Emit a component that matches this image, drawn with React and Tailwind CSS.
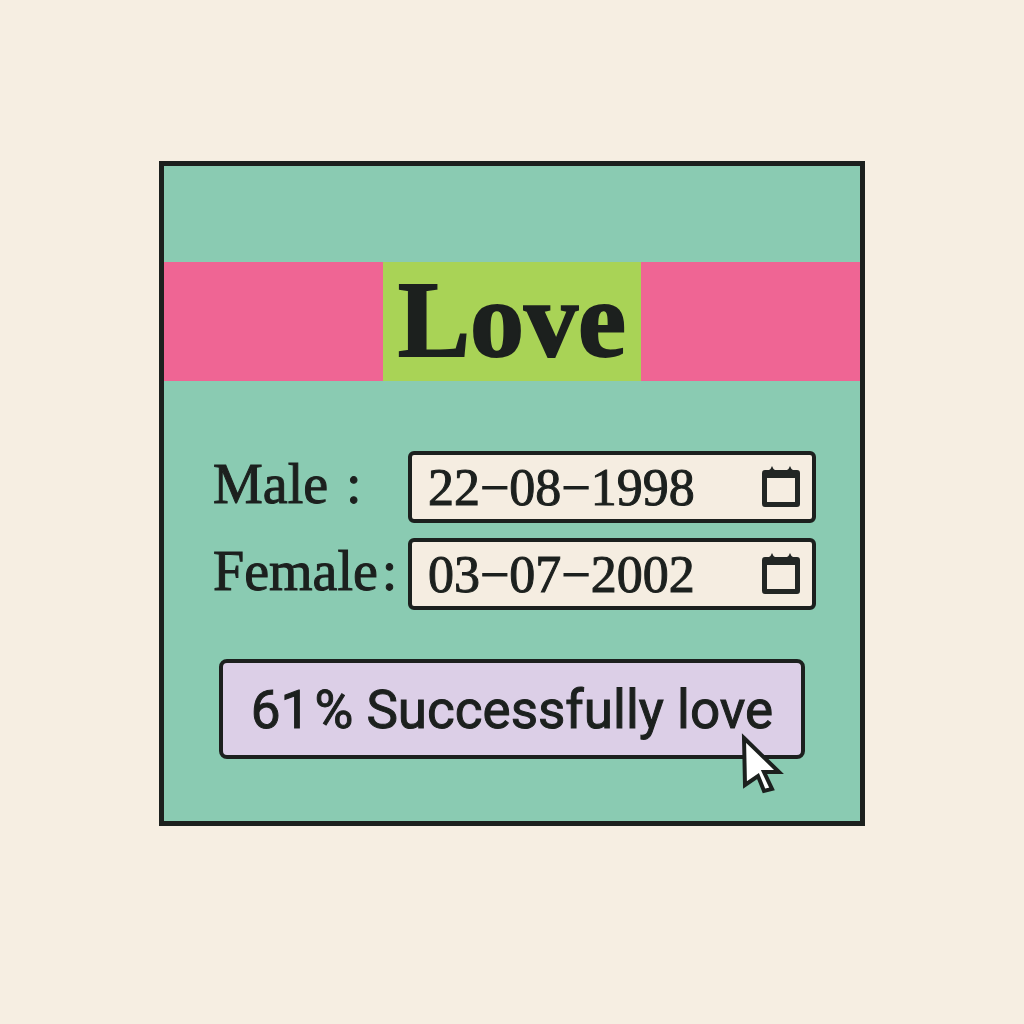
import { useState } from "react";

function CalendarIcon() {
  return (
    <svg viewBox="0 0 38 42" className="h-[42px] w-[38px]" aria-hidden="true">
      <path
        fillRule="evenodd"
        fill="#222624"
        d="M3 4H7Q9 3 10 0Q11 3 13 4H25Q27 3 28 0Q29 3 31 4H35Q38 4 38 7V38Q38 41 35 41H3Q0 41 0 38V7Q0 4 3 4ZM5 12V36H33V12Z"
      />
    </svg>
  );
}

function Cursor() {
  return (
    <svg
      viewBox="0 0 46 64"
      className="pointer-events-none absolute right-[19px] -bottom-[36px] h-16 w-[46px]"
      aria-hidden="true"
    >
      <path
        d="M4 7L39 41L24 41L32 58L24 60L18 45L5 54Z"
        fill="#fff"
        stroke="#1c201e"
        strokeWidth="4"
        strokeLinejoin="miter"
      />
    </svg>
  );
}

function DateRow({ id, label, colonClass, initial }) {
  const [value, setValue] = useState(initial);
  return (
    <div className="grid grid-cols-[195px_1fr] items-center">
      <label
        htmlFor={id}
        className="pb-1.5 text-[56px] leading-[64px] whitespace-nowrap [-webkit-text-stroke:1px_#1c201e]"
      >
        {label}
        <span className={colonClass}>:</span>
      </label>
      <div className="flex h-[72px] items-center rounded-md border-4 border-[#1c201e] bg-[#f5ede1] pr-3 pl-4">
        <input
          id={id}
          type="text"
          value={value}
          onChange={(e) => setValue(e.target.value)}
          className="w-full min-w-0 flex-1 bg-transparent pt-0.5 text-[52px] leading-[60px] outline-none [-webkit-text-stroke:1px_#1c201e]"
        />
        <button type="button" aria-label={`Choose ${label} date`} className="shrink-0">
          <CalendarIcon />
        </button>
      </div>
    </div>
  );
}

export default function App() {
  return (
    <main className="min-h-screen bg-[#f6eee2] px-4 pt-[161px] pb-[198px] font-['Liberation_Serif',serif] text-[#1c201e]">
      <section className="mx-auto w-full max-w-[706px] border-[5px] border-[#1c201e] bg-[#8acbb2] pt-24 pb-[62px]">
        <div className="flex justify-center bg-[#ef6594]">
          <h1 className="bg-[#a9d356] px-[15px] pb-1 text-[108px] leading-[115px] font-bold [-webkit-text-stroke:2px_#1c201e]">
            Love
          </h1>
        </div>
        <form className="pt-[70px]" onSubmit={(e) => e.preventDefault()}>
          <div className="flex flex-col gap-[15px] pr-11 pl-[49px]">
            <DateRow id="male" label="Male" colonClass="ml-[18px]" initial="22−08−1998" />
            <DateRow id="female" label="Female" colonClass="ml-1" initial="03−07−2002" />
          </div>
          <div className="relative mx-[55px] mt-[49px]">
            <button
              type="submit"
              className="h-[100px] w-full rounded-lg border-4 border-[#1c201e] bg-[#dccfe7] pt-1 font-['Roboto',sans-serif] text-[53px] whitespace-nowrap [-webkit-text-stroke:1px_#1c201e]"
            >
              61<span className="ml-1">%</span> Successfully love
            </button>
            <Cursor />
          </div>
        </form>
      </section>
    </main>
  );
}
